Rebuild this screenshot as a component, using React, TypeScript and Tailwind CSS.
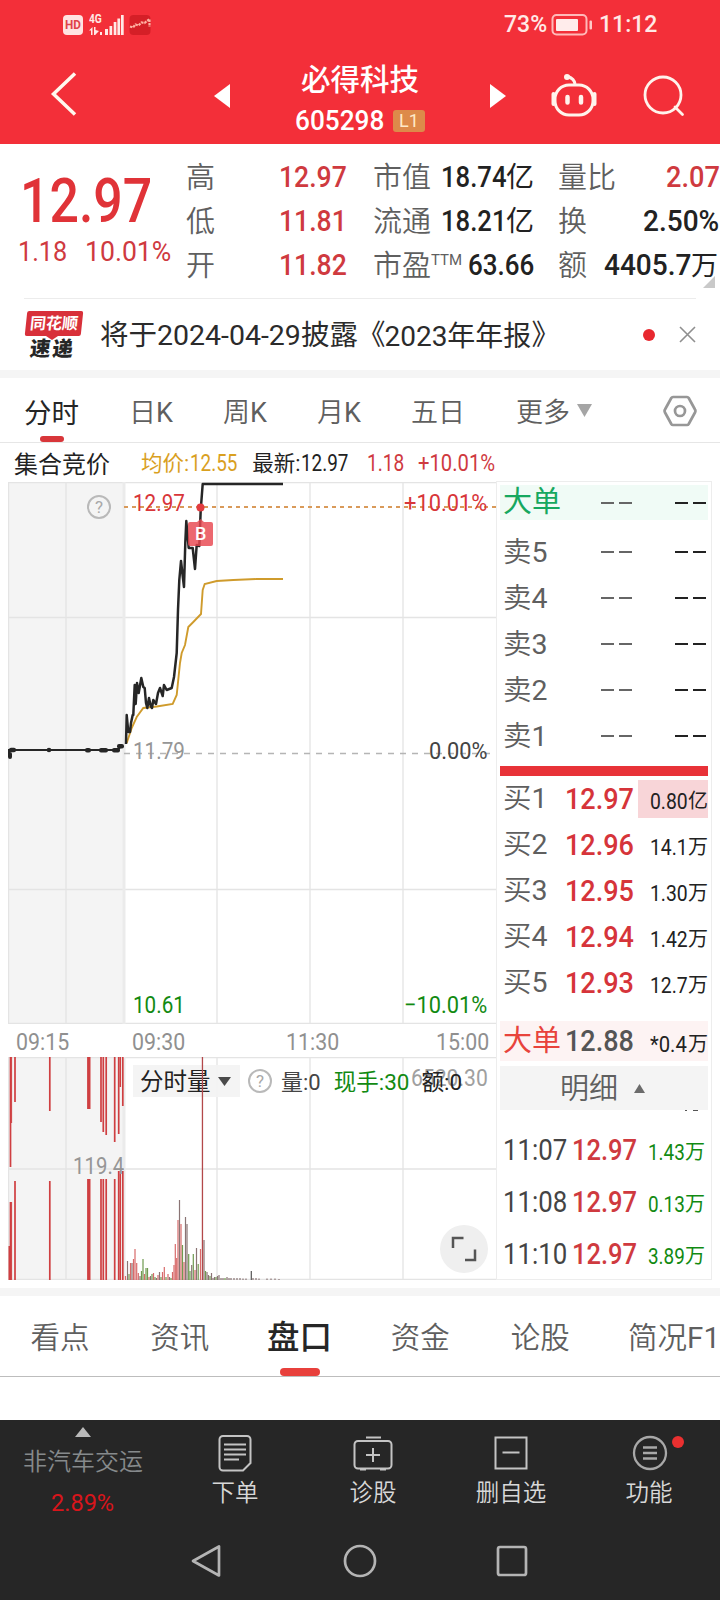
import React from 'react';
import clsx from 'clsx';

// Condensed figures: the outer box keeps the narrowed width in the flow
function Num({ box, face, children }: { box: string; face: string; children: React.ReactNode }) {
  return (
    <span className={clsx('flex shrink-0 items-center', box)}>
      <span className={clsx('origin-left whitespace-nowrap', face)}>{children}</span>
    </span>
  );
}

function StatusBar() {
  return (
    <div className="flex h-[48px] items-center pl-[63px] pt-[2px] text-[#ffe9e6]">
      <div className="flex h-[20px] w-[20px] items-center justify-center rounded-[4px] bg-[#ffe3e1]">
        <span className="origin-center scale-x-90 text-[13px] font-bold text-[#e0434a]">HD</span>
      </div>
      <div className="ml-[6px] flex h-[22px] w-[13px] flex-col items-start">
        <span className="origin-left scale-x-[.85] text-[12px] font-bold leading-[11px]">4G</span>
        <svg className="mt-[2px]" width="13" height="8" viewBox="0 0 13 8" fill="currentColor">
          <path d="M0 3.5 3.5 0V8H2V3.5zM5 0h1.500v3L10 4 6.500 7.500V8H5zM11 5h2v3h-2z" />
        </svg>
      </div>
      <svg className="ml-[2px]" width="20" height="22" viewBox="0 0 20 22" fill="currentColor">
        <path d="M1 15h3v6H1zM5.500 12h2.700v9H5.500zM9.700 8h2.700v13H9.700zM13.400 4.500h2.700V21h-2.700zM17 1h2.700v20H17z" />
      </svg>
      <svg className="ml-[5px]" width="22" height="22" viewBox="0 0 22 22">
        <rect x="0.500" y="1" width="21" height="20" rx="4" fill="#d51f27" />
        <path d="M1 12.500l3 1 2.500-3 3 1 3-3 3 .5 5-4v8" fill="none" stroke="#ffb0a2" strokeWidth="2.200" strokeDasharray="2.500 1" />
      </svg>
      <Num box="ml-[353px] w-[47px]" face="text-[23px] font-medium">73%</Num>
      <svg width="42" height="24" viewBox="0 0 42 24">
        <rect x="1.500" y="2" width="34" height="19.500" rx="4" fill="none" stroke="#ffb9b8" strokeWidth="2" />
        <rect x="5" y="6" width="22" height="12" rx="1" fill="#ffeceb" />
        <rect x="38.500" y="7.500" width="2.500" height="9" rx="1" fill="#ffc9c7" />
      </svg>
      <Num box="ml-[6px] w-[60px]" face="text-[23px] font-medium">11:12</Num>
    </div>
  );
}

function Header() {
  return (
    <header className="h-[144px] bg-[#f32f39]">
      <StatusBar />
      <div className="flex h-[96px] items-start text-white">
        <svg className="ml-[50px] mt-[22px]" width="28" height="48" viewBox="0 0 28 48" fill="none" stroke="#fff8ee" strokeWidth="3.500">
          <path d="M25 3.500 3.500 24 25 44.500" />
        </svg>
        <svg className="ml-[136px] mt-[36px]" width="16" height="24" viewBox="0 0 16 24" fill="currentColor">
          <path d="M16 0v24L0 12z" />
        </svg>
        <div className="ml-[60px] mt-[14px] flex w-[140px] flex-col items-center">
          <h1 className="whitespace-nowrap text-[29.500px] font-medium leading-[36px]">必得科技</h1>
          <div className="mt-[11px] flex h-[24px] items-center self-start pl-[5px]">
            <Num box="w-[98px]" face="text-[27px] leading-none font-medium scale-x-[.97]">605298</Num>
            <span className="flex h-[22px] w-[32px] items-center justify-center rounded-[3px] bg-[#dd8a4a] text-[18px] leading-none text-[#ffe9c8]">L1</span>
          </div>
        </div>
        <svg className="ml-[60px] mt-[36px]" width="16" height="24" viewBox="0 0 16 24" fill="currentColor">
          <path d="M0 0v24l16-12z" />
        </svg>
        <svg className="ml-[44px] mt-[24px]" width="48" height="46" viewBox="0 0 48 46" fill="none" stroke="#fff3ec" strokeWidth="3">
          <path d="M25 12c-.500-4-3-6-7-7.500" />
          <circle cx="17" cy="5" r="3" fill="#fff3ec" stroke="none" />
          <rect x="5" y="13" width="38" height="30" rx="14" />
          <path d="M3.500 22v10M44.500 22v10" strokeWidth="4" strokeLinecap="round" />
          <path d="M17.500 25v5.500M31 25v5.500" strokeWidth="4.500" strokeLinecap="round" />
        </svg>
        <svg className="ml-[44px] mt-[26px]" width="44" height="44" viewBox="0 0 44 44" fill="none" stroke="#fff3ec" strokeWidth="2.800">
          <circle cx="21" cy="21" r="18" />
          <path d="M33 33l7.500 7.500" strokeLinecap="round" />
        </svg>
      </div>
    </header>
  );
}

const figure = 'text-[29.500px] leading-none font-medium';

function Quote() {
  return (
    <section className="relative h-[154px] pt-[12px]">
      <div className="flex">
        <div className="w-[186px] pl-[20px] pt-[15px] text-[#e03338]">
          <Num box="h-[60px] w-[140px]" face="text-[61px] leading-none font-medium scale-x-[.85]">12.97</Num>
          <div className="-ml-[2px] mt-[7px] flex text-[#cf3a3f]">
            <Num box="w-[67px]" face="text-[28px] leading-none scale-x-[.9]">1.18</Num>
            <Num box="w-[90px]" face="text-[28px] leading-none scale-x-[.95]">10.01%</Num>
          </div>
        </div>
        <div className="w-[187px] text-[29px] font-[350] text-[#5f5f5f]">
          {[['高', '12.97'], ['低', '11.81'], ['开', '11.82']].map(([label, value]) => (
            <div key={label} className="flex h-[44px] items-center text-[#cf3a3f]">
              <span className="w-[93px] pt-[2px] text-[#5f5f5f]">{label}</span>
              <Num box="w-[68px]" face={clsx(figure, 'scale-x-[.9]')}>{value}</Num>
            </div>
          ))}
        </div>
        <div className="w-[185px] text-[29px] font-[350] text-[#5f5f5f]">
          {[['市值', '18.74'], ['流通', '18.21']].map(([label, value]) => (
            <div key={label} className="flex h-[44px] items-center">
              <span className="w-[68px] pt-[2px]">{label}</span>
              <Num box="w-[65px] text-[#222]" face={clsx(figure, 'scale-x-[.87]')}>{value}</Num>
              <span className="text-[28px] font-normal text-[#222]">亿</span>
            </div>
          ))}
          <div className="flex h-[44px] items-center">
            <span className="pt-[2px]">市盈</span>
            <span className="-mt-[12px] w-[37px] text-[15px] font-normal">TTM</span>
            <Num box="w-[66px] text-[#222]" face={clsx(figure, 'scale-x-[.88]')}>63.66</Num>
          </div>
        </div>
        <div className="w-[162px] text-[29px] font-[350] text-[#5f5f5f]">
          <div className="flex h-[44px] items-center justify-between">
            <span className="pt-[2px]">量比</span>
            <Num box="w-[54px] text-[#cf3a3f]" face={clsx(figure, 'scale-x-[.92]')}>2.07</Num>
          </div>
          <div className="flex h-[44px] items-center justify-between">
            <span className="pt-[2px]">换</span>
            <Num box="w-[77px] text-[#222]" face={clsx(figure, 'scale-x-[.95]')}>2.50%</Num>
          </div>
          <div className="flex h-[44px] items-center">
            <span className="w-[46px] pt-[2px]">额</span>
            <Num box="w-[87px] text-[#222]" face={clsx(figure, 'scale-x-[.95]')}>4405.7</Num>
            <span className="text-[27px] font-normal text-[#222]">万</span>
          </div>
        </div>
      </div>
      <svg className="absolute right-[5px] top-[132px]" width="12" height="12" viewBox="0 0 12 12">
        <path d="M12 0v12H0z" fill="#c9c9c9" />
      </svg>
    </section>
  );
}

function NewsRow() {
  return (
    <section className="mx-[24px] flex h-[72px] items-center border-t border-[#ececec]">
      <div className="flex w-[60px] flex-col items-start pl-[2px] pt-[3px]">
        <div className="flex h-[25px] w-[56px] -skew-x-6 items-center justify-center rounded-[2px] bg-[#d8303a] text-[16px] font-bold leading-none text-white">
          <span className="whitespace-nowrap">同花顺</span>
        </div>
        <svg className="ml-[20px]" width="12" height="4" viewBox="0 0 12 4" fill="#d8303a">
          <path d="M0 0h12L6 4z" />
        </svg>
        <div className="-mt-[1px] ml-[4px] flex h-[22px] -skew-x-6 gap-[2px] whitespace-nowrap text-[20.500px] font-black leading-[21px] text-[#262626]">
          <span>速</span>
          <span>递</span>
        </div>
      </div>
      <p className="ml-[16px] flex items-center whitespace-nowrap pt-[4px] text-[28.500px] text-[#2b2b2b]">
        将于2024-04-29披露<span className="-ml-[1px]">《</span>
        <span className="-ml-[1px] text-[28px]">2023年年报</span>》
      </p>
      <span className="ml-auto h-[12px] w-[12px] rounded-full bg-[#e8282f]" />
      <svg className="ml-[24px]" width="17" height="17" viewBox="0 0 17 17" stroke="#8f8f8f" strokeWidth="1.600">
        <path d="M1 1l15 15M16 1 1 16" />
      </svg>
    </section>
  );
}

function PeriodTabs() {
  return (
    <nav className="flex h-[65px] items-center border-b border-[#e6e6e6] pl-[24px] pt-[3px] text-[27px] font-[350] text-[#5f5f5f]">
      <div className="relative flex h-full w-[105px] items-center pt-[4px] text-[27.500px] font-normal text-[#262626]">
        分时
        <span className="absolute bottom-0 left-[16px] h-[6px] w-[24px] rounded-full bg-[#d8363a]" />
      </div>
      {['日', '周', '月'].map((unit) => (
        <span key={unit} className="w-[94px] pt-[4px]">
          {unit}
          <span className="font-normal">K</span>
        </span>
      ))}
      <span className="w-[105px] pt-[4px]">五日</span>
      <span className="pt-[4px]">更多</span>
      <svg className="-mt-[2px] ml-[7px]" width="15" height="13" viewBox="0 0 15 13" fill="#a5a5a5">
        <path d="M0 0h15L7.500 13z" />
      </svg>
      <svg className="-mt-[2px] ml-[71px]" width="34" height="32" viewBox="0 0 34 32" fill="none" stroke="#979797" strokeWidth="2.700">
        <path d="M10 2h14a2 2 0 0 1 1.700 1L32 14.500a3 3 0 0 1 0 3L25.700 29A2 2 0 0 1 24 30H10a2 2 0 0 1-1.700-1L2 17.500a3 3 0 0 1 0-3L8.300 3A2 2 0 0 1 10 2z" />
        <circle cx="17" cy="16" r="5" />
      </svg>
    </nav>
  );
}

function InfoRow() {
  return (
    <div className="flex h-[38px] items-center pl-[14px] pt-[4px] text-[#222]">
      <span className="w-[127px] pt-[1px] text-[24px]">集合竞价</span>
      <span className="text-[21.500px] text-[#d9a01f]">均价:</span>
      <Num box="ml-[1px] w-[62px] text-[#d9a01f]" face="text-[23px] scale-x-[.82]">12.55</Num>
      <span className="text-[21.500px]">最新:</span>
      <Num box="ml-[1px] w-[66px]" face="text-[23px] scale-x-[.82]">12.97</Num>
      <Num box="w-[51px] text-[#cf3a3f]" face="text-[23px] scale-x-[.83]">1.18</Num>
      <Num box="w-[80px] text-[#cf3a3f]" face="text-[23px] scale-x-[.88]">+10.01%</Num>
    </div>
  );
}

const pricePath =
  '126,744 126.700,715 128.300,732 130,732 131,723 132.700,715 133.300,715 134.700,685 135.700,704 137,683 138.700,693 141.300,678 143.300,687 144.700,688 146,703 147.300,708 149,698 150.700,706 152,708 153.300,700 156,704 158,693 160,688 162.700,696 164,685 166.700,690 171.700,688 174,677 176.700,653 178,610 179.300,580 181,561 182,570 184,587 185.300,543 186.300,521 188.700,548 192.700,548 195,569 196.700,545 199.300,546 200.700,510 202.700,484 283,484';

const averagePath =
  '126.700,743 131.700,728 136.700,717 143.300,708 156.700,706.500 172.700,704 176.700,695 180,663 181.700,653 185,645 188.300,627 193.300,622 201,614 202.700,590 204.700,584 216.700,581 233.300,580 256.700,579 283,579';

function Help({ className }: { className?: string }) {
  return (
    <span className={clsx('flex h-[24px] w-[24px] items-center justify-center rounded-full border-2 border-[#b9b9b9] text-[17px] leading-none text-[#a8a8a8]', className)}>
      ?
    </span>
  );
}

function PriceChart() {
  return (
    <div className="relative h-[542px]">
      <svg className="block" width="488" height="542" viewBox="8 482 488 542" fill="none">
        <rect x="8" y="482" width="116" height="542" fill="#f4f4f4" />
        <path d="M8.500 482v542M66 482v542M217 482v542M310 482v542M403 482v542M8 482.500h488M8 617.500h488M8 889.500h488M8 1023.500h488" stroke="#e4e4e4" strokeWidth="1.300" />
        <path d="M124 482v542" stroke="#ebebeb" strokeWidth="3" />
        <path d="M124 753.500h372" stroke="#b5b5b5" strokeWidth="1.500" strokeDasharray="6 6" />
        <path d="M124 507h372" stroke="#d99a5a" strokeWidth="1.900" strokeDasharray="4 4" />
        <path d="M9 755v-5h109l3-4" stroke="#262626" strokeWidth="2" />
        <g fill="#262626">
          <rect x="8" y="752" width="4" height="7" rx="2" />
          <rect x="9" y="747.800" width="7" height="4.500" rx="2" />
          <circle cx="49" cy="750" r="2.300" />
          <rect x="85" y="748" width="6" height="4.500" rx="2" />
          <rect x="99" y="748" width="9" height="4.500" rx="2" />
          <rect x="112" y="748" width="8" height="4.500" rx="2" />
          <rect x="117" y="744" width="7" height="4.500" rx="2" />
        </g>
        <polyline points={averagePath} stroke="#cf9b2c" strokeWidth="1.900" />
        <polyline points={pricePath} stroke="#262626" strokeWidth="2.500" strokeLinejoin="round" />
        <circle cx="200.500" cy="507.500" r="4" fill="#e23c40" />
        <path d="M190 522h7l3.500-3 3.500 3h7a2 2 0 0 1 2 2v20a2 2 0 0 1-2 2h-21a2 2 0 0 1-2-2v-20a2 2 0 0 1 2-2z" fill="#e8474f" fillOpacity=".82" />
      </svg>
      <span className="absolute left-[187px] top-[42px] text-[18px] font-medium leading-[20px] text-white">B</span>
      <Help className="absolute left-[79px] top-[13px]" />
      <div className="absolute left-[125px] top-[9px] text-[#d8363a]">
        <Num box="w-[54px]" face="text-[24px] leading-none scale-x-[.86]">12.97</Num>
      </div>
      <div className="absolute left-[396px] top-[9px] text-[#d8363a]">
        <Num box="w-[90px]" face="text-[24px] leading-none scale-x-[.91]">+10.01%</Num>
      </div>
      <div className="absolute left-[125px] top-[257px] text-[#969696]">
        <Num box="w-[54px]" face="text-[24px] leading-none scale-x-[.86]">11.79</Num>
      </div>
      <div className="absolute left-[421px] top-[257px] text-[#444]">
        <Num box="w-[62px]" face="text-[24px] leading-none scale-x-[.91]">0.00%</Num>
      </div>
      <div className="absolute left-[125px] top-[511px] text-[#128a12]">
        <Num box="w-[54px]" face="text-[24px] leading-none scale-x-[.86]">10.61</Num>
      </div>
      <div className="absolute left-[396px] top-[511px] text-[#128a12]">
        <Num box="w-[90px]" face="text-[24px] leading-none scale-x-[.91]">−10.01%</Num>
      </div>
    </div>
  );
}

function TimeAxis() {
  const face = 'text-[24px] leading-none scale-x-[.89]';
  return (
    <div className="flex h-[33px] items-center pl-[8px] pt-[3px] text-[#909090]">
      <Num box="w-[116px]" face={face}>09:15</Num>
      <Num box="w-[154px]" face={face}>09:30</Num>
      <Num box="w-[150px]" face={face}>11:30</Num>
      <Num box="w-[54px]" face={face}>15:00</Num>
    </div>
  );
}

// auction bars: x, width, length hanging from the top, length rising from the bottom
const auctionBars = [
  [9.500, 2, 0, 34], [10.500, 1.700, 110, 78], [11.600, 1, 66, 78], [15, 1.700, 45, 99],
  [49.800, 1.700, 54, 99], [88.800, 3.400, 52, 101], [101, 1.700, 65, 101], [103.300, 1.700, 75, 101],
  [106.200, 1.700, 78, 101], [114.700, 1.700, 85, 101], [118.700, 1.700, 77, 109], [120.300, 1.500, 30, 109], [122.800, 1.700, 49, 109],
];

const R = '#d86a6a';
const G = '#6f9a50';
const K = '#8a7474';
const minuteBars: [number, number, string][] = [
  [125.500, 4, R], [127.500, 19, K], [129, 6, G], [130.500, 17, R], [132, 17, K], [133.500, 21, R], [135, 31, R], [136.700, 17, R],
  [138.300, 7, R], [140, 4, K], [141.500, 9, G], [143, 21, G], [144.500, 6, R], [146, 12, G], [147.500, 12, G], [149, 3, R],
  [150.500, 4, K], [152, 6, G], [153.500, 7, R], [155, 3, G], [156.500, 2, K], [158, 5, R], [159.500, 8, K], [161, 3, G],
  [162.500, 8, R], [164.300, 13, R], [166, 3, G], [168, 6, R], [169.500, 3, K], [171, 2, G], [172.500, 8, R], [174, 15, R],
  [175.300, 36, R], [176.700, 22, R], [178, 60, R], [179.500, 80, K], [181, 56, R], [182.500, 35, G], [184, 18, R], [185.500, 63, K],
  [187, 56, K], [188.700, 26, G], [190, 9, G], [191.700, 15, K], [193.300, 26, G], [195, 10, R], [196.500, 32, K], [198.200, 16, G],
  [200.500, 31, R], [204, 40, K], [205.500, 9, G], [207, 8, K], [208.500, 5, K], [210, 4, G], [211.500, 7, K], [213, 2, K],
  [214.500, 3, K], [216, 3, G], [217.500, 4, K], [219, 5, K], [221, 2, K], [223, 2, K], [225, 2, G], [227, 3, K],
  [229, 2, K], [231, 2, K], [234, 2, K], [237, 2, K], [240, 2, K], [243, 1.500, K], [246, 1.500, K], [251.300, 9, '#555'],
  [253, 2, K], [256, 2, K], [259, 1.500, K], [267, 1.500, K], [271, 1.500, K], [275, 1.500, K], [279, 1, K],
];

function VolumeChart() {
  return (
    <div className="relative h-[223px]">
      <svg className="block" width="488" height="223" viewBox="8 1057 488 223" fill="none">
        <rect x="8" y="1057" width="116" height="223" fill="#f4f4f4" />
        <path d="M8.500 1057v223M66 1057v223M217 1057v223M310 1057v223M403 1057v223M8 1057.500h488M8 1169h488M8 1279.500h488" stroke="#e4e4e4" strokeWidth="1.300" />
        <path d="M124 1057v223" stroke="#ebebeb" strokeWidth="3" />
        {auctionBars.map(([x, w, top, bottom]) => (
          <g key={x} fill="#cf3f41">
            <rect x={x - w / 2} y="1057" width={w} height={top} />
            <rect x={x - w / 2} y={1280 - bottom} width={w} height={bottom} />
          </g>
        ))}
        {minuteBars.map(([x, h, color]) => (
          <rect key={x} x={x - 0.6} y={1280 - h} width="1.200" height={h} fill={color} />
        ))}
      </svg>
      <div className="absolute left-[65px] top-[97px] text-[#969696]">
        <Num box="w-[54px]" face="text-[24px] leading-none scale-x-[.85]">119.4</Num>
      </div>
      <div className="absolute left-[403px] top-[9px] text-[#a0a0a0]">
        <Num box="w-[80px]" face="text-[24px] leading-none scale-x-[.88]">6520.30</Num>
      </div>
      <div className="absolute left-[125px] top-[8px] flex h-[32px] items-center whitespace-nowrap text-[22px] leading-none text-[#222]">
        <div className="flex h-[32px] w-[107px] items-center bg-[#f3f3f3]/95 pl-[7px] pt-[3px] text-[23.500px]">
          分时量
          <svg className="-mt-[3px] ml-[7px]" width="13" height="9" viewBox="0 0 13 9" fill="#4a4a4a">
            <path d="M0 0h13L6.500 9z" />
          </svg>
        </div>
        <Help className="ml-[8px]" />
        <span className="ml-[9px] pt-[3px] text-[#444]">量:0</span>
        <span className="ml-[13px] pt-[3px] text-[22.500px] text-[#128a12]">现手:30</span>
        <span className="ml-[12px] pt-[3px] text-[22.500px]">额:0</span>
      </div>
      <svg className="absolute left-0 top-0" width="488" height="223" viewBox="8 1057 488 223">
        <rect x="201.800" y="1057" width="1.300" height="223" fill="#b3484a" />
      </svg>
      <button className="absolute left-[432px] top-[168px] flex h-[48px] w-[48px] items-center justify-center rounded-full bg-[#efefef]">
        <svg width="26" height="26" viewBox="0 0 26 26" fill="none" stroke="#555" strokeWidth="2.500">
          <path d="M2 12V2H12.500M14 24h10V13.500" />
        </svg>
      </button>
    </div>
  );
}

function Dashes({ className }: { className: string }) {
  return (
    <span className={clsx('flex gap-[5px]', className)}>
      <i className="h-[2px] w-[13px] bg-current" />
      <i className="h-[2px] w-[13px] bg-current" />
    </span>
  );
}

const bids = [
  ['1', '12.97', '0.80', '亿'],
  ['2', '12.96', '14.1', '万'],
  ['3', '12.95', '1.30', '万'],
  ['4', '12.94', '1.42', '万'],
  ['5', '12.93', '12.7', '万'],
];

const trades = [
  ['11:07', '1.43'],
  ['11:08', '0.13'],
  ['11:10', '3.89'],
];

function OrderBook() {
  return (
    <aside className="flex h-[799px] w-[216px] flex-col border border-[#ededed] px-[3px] text-[28.500px] leading-none text-[#5f5f5f] *:shrink-0">
      <div className="mt-[3px] flex h-[35px] items-center bg-[#f0fbf6] pl-[3px]">
        <span className="w-[98px] text-[29px] text-[#16a860]">大单</span>
        <Dashes className="w-[74px] text-[#666]" />
        <Dashes className="text-[#222]" />
      </div>
      <div className="mt-[9px] flex flex-col">
        {['5', '4', '3', '2', '1'].map((level) => (
          <div key={level} className="flex h-[46px] items-center pl-[3px]">
            <span className="w-[98px] pt-[2px]">
              <span className="font-[350]">卖</span>
              {level}
            </span>
            <Dashes className="w-[74px] text-[#666]" />
            <Dashes className="text-[#222]" />
          </div>
        ))}
      </div>
      <div className="mt-[7px] h-[10px] bg-[#e83238]" />
      {bids.map(([level, price, volume, unit], i) => (
        <div key={level} className="flex h-[46px] items-center pl-[3px]">
          <span className="w-[62px] pt-[1px]">
            <span className="font-[350]">买</span>
            {level}
          </span>
          <Num box="w-[73px] text-[#d6343a]" face="text-[30px] leading-none font-medium scale-x-[.9]">{price}</Num>
          <div className={clsx('flex h-[38px] flex-1 items-center justify-end pt-[4px] text-[#222]', i === 0 && 'bg-[#f8d5d8]')}>
            <Num box="w-[38px]" face="text-[22.500px] leading-none scale-x-[.86]">{volume}</Num>
            <span className="text-[20px]">{unit}</span>
          </div>
        </div>
      ))}
      <div className="mt-[15px] flex h-[40px] items-center bg-[#fdf3f3] pl-[3px]">
        <span className="w-[62px] pt-[1px] text-[29px] text-[#e8433c]">大单</span>
        <Num box="w-[73px] text-[#555]" face="text-[30px] leading-none font-medium scale-x-[.9]">12.88</Num>
        <div className="flex flex-1 items-center justify-end pt-[6px] text-[#222]">
          <Num box="w-[38px]" face="text-[22.500px] leading-none scale-x-[.9]">*0.4</Num>
          <span className="text-[20px]">万</span>
        </div>
      </div>
      <div className="mt-[5px] flex h-[44px] items-center bg-[#f4f4f4] pl-[60px]">
        <span className="pt-[2px] text-[29px] font-[350]">明细</span>
        <svg className="ml-[16px]" width="11" height="9" viewBox="0 0 11 9" fill="#6b6b6b">
          <path d="M0 9h11L5.500 0z" />
        </svg>
      </div>
      {/* tips of the row that is scrolled under the header */}
      <svg className="ml-[182px]" width="20" height="2" viewBox="0 0 20 2" fill="#555">
        <path d="M3 0h2v1H3zM11 0h5v1h-5z" />
      </svg>
      <div className="mt-[12px] flex flex-col">
        {trades.map(([time, volume]) => (
          <div key={time} className="flex h-[52px] items-center pl-[3px]">
            <Num box="w-[69px] text-[#444]" face="text-[29px] leading-none scale-x-[.89]">{time}</Num>
            <Num box="w-[66px] text-[#cf3a3f]" face="text-[29px] leading-none font-medium scale-x-[.88]">12.97</Num>
            <div className="flex flex-1 items-center justify-end pr-[3px] pt-[4px] text-[#128a12]">
              <Num box="w-[37px]" face="text-[22.500px] leading-none scale-x-[.84]">{volume}</Num>
              <span className="text-[20px]">万</span>
            </div>
          </div>
        ))}
      </div>
    </aside>
  );
}

function SectionTabs() {
  return (
    <nav className="flex h-[81px] items-center overflow-hidden border-b border-[#bdbdbd] text-[29.500px] font-[350] text-[#5f5f5f]">
      <span className="w-[120px] pt-[4px] text-center">看点</span>
      <span className="w-[120px] pt-[4px] text-center">资讯</span>
      <div className="relative flex h-full w-[120px] items-center justify-center pt-[5px] text-[32.500px] font-medium text-[#262626]">
        盘口
        <span className="absolute bottom-0 left-[40px] h-[8px] w-[40px] rounded-full bg-[#e8403c]" />
      </div>
      <span className="w-[120px] pl-[2px] pt-[4px] text-center">资金</span>
      <span className="w-[120px] pl-[2px] pt-[4px] text-center">论股</span>
      <span className="whitespace-nowrap pl-[29px] pt-[4px]">
        简况<span className="font-normal">F1</span>
      </span>
    </nav>
  );
}

function Action({ label, children }: { label: string; children: React.ReactNode }) {
  return (
    <div className="flex w-[138px] flex-col items-center pt-[13px]">
      <svg width="40" height="40" viewBox="0 0 40 40" fill="none" stroke="#c4c4c4" strokeWidth="2">
        {children}
      </svg>
      <span className="mt-[6px] text-[23.500px] font-[350] leading-[28px] text-[#d8d8d8]">{label}</span>
    </div>
  );
}

function ActionBar() {
  return (
    <div className="flex h-[100px] text-[24px]">
      <div className="flex w-[166px] flex-col items-center pt-[7px]">
        <svg width="16" height="10" viewBox="0 0 16 10" fill="#b9b9b9">
          <path d="M0 10h16L8 0z" />
        </svg>
        <span className="mt-[11px] font-[350] leading-[28px] text-[#868a8c]">非汽车交运</span>
        <Num box="mt-[13px] h-[28px] w-[64px]" face="text-[#d8151b] scale-x-[.98]">2.89%</Num>
      </div>
      <Action label="下单">
        <path d="M8 3h24a3.500 3.500 0 0 1 3.500 3.500V30L28 37.500H8A3.500 3.500 0 0 1 4.500 34V6.500A3.500 3.500 0 0 1 8 3z" />
        <path d="M9 11.500h22M9 16.500h22M9 21.500h22M9 26.500h15" />
      </Action>
      <Action label="诊股">
        <rect x="1.500" y="8" width="37" height="27.500" rx="3.500" />
        <path d="M13 4.500h15M20 15v14M13 22h14M7 36.500h6M27 36.500h6" />
      </Action>
      <Action label="删自选">
        <path d="M4.500 4.500h31v31h-31zM11.500 19.500h17" />
      </Action>
      <div className="relative">
        <Action label="功能">
          <circle cx="21" cy="20" r="16" stroke="#a8a8a8" strokeWidth="2.300" />
          <path d="M14 14.500h14M14 20h14M14 25.500h14" stroke="#a8a8a8" strokeWidth="2.500" />
        </Action>
        <span className="absolute left-[92px] top-[16px] h-[12px] w-[12px] rounded-full bg-[#ea3030]" />
      </div>
    </div>
  );
}

function SystemNav() {
  return (
    <div className="flex h-[80px] items-center pl-[189px] pt-[2px]">
      <svg width="34" height="36" viewBox="0 0 34 36" fill="none" stroke="#b4b4b4" strokeWidth="2.700" strokeLinejoin="round">
        <path d="M30 3.500v29L4 18z" />
      </svg>
      <svg className="ml-[119px]" width="36" height="36" viewBox="0 0 36 36" fill="none" stroke="#b4b4b4" strokeWidth="2.700">
        <circle cx="18" cy="18" r="15" />
      </svg>
      <svg className="ml-[117px]" width="34" height="34" viewBox="0 0 34 34" fill="none" stroke="#b4b4b4" strokeWidth="2.700">
        <rect x="3" y="3" width="28" height="28" rx="2" />
      </svg>
    </div>
  );
}

export default function App() {
  return (
    <div className="flex h-[1600px] w-[720px] flex-col overflow-hidden bg-white font-[Roboto,'Noto_Sans_CJK_SC',sans-serif]">
      <Header />
      <Quote />
      <NewsRow />
      <div className="h-[8px] bg-[#f5f5f5]" />
      <PeriodTabs />
      <InfoRow />
      <div className="flex h-[799px] pl-[8px]">
        <div className="w-[488px] pt-[1px]">
          <PriceChart />
          <TimeAxis />
          <VolumeChart />
        </div>
        <OrderBook />
      </div>
      <div className="mt-[8px] h-[8px] bg-[#f5f5f5]" />
      <SectionTabs />
      <div className="h-[43px]" />
      <footer className="h-[180px] bg-[#262626]">
        <ActionBar />
        <SystemNav />
      </footer>
    </div>
  );
}
